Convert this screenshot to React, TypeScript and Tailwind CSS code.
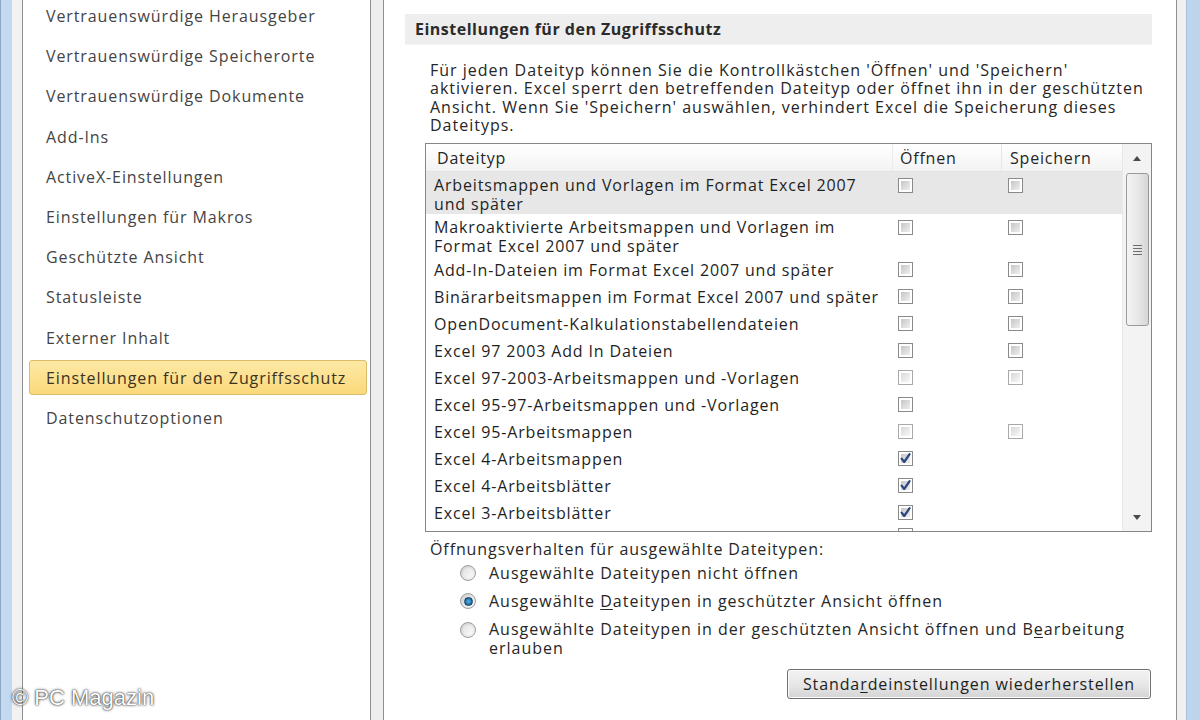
import React from 'react';

type Cb = 'off' | 'on' | 'dim' | 'none';

interface FileRow {
  label: string;
  open: Cb;
  save: Cb;
  twoLines?: boolean;
  selected?: boolean;
}

const navItems = [
  'Vertrauenswürdige Herausgeber',
  'Vertrauenswürdige Speicherorte',
  'Vertrauenswürdige Dokumente',
  'Add-Ins',
  'ActiveX-Einstellungen',
  'Einstellungen für Makros',
  'Geschützte Ansicht',
  'Statusleiste',
  'Externer Inhalt',
  'Einstellungen für den Zugriffsschutz',
  'Datenschutzoptionen',
];

const rows: FileRow[] = [
  { label: 'Arbeitsmappen und Vorlagen im Format Excel 2007 und später', open: 'off', save: 'off', twoLines: true, selected: true },
  { label: 'Makroaktivierte Arbeitsmappen und Vorlagen im Format Excel 2007 und später', open: 'off', save: 'off', twoLines: true },
  { label: 'Add-In-Dateien im Format Excel 2007 und später', open: 'off', save: 'off' },
  { label: 'Binärarbeitsmappen im Format Excel 2007 und später', open: 'off', save: 'off' },
  { label: 'OpenDocument-Kalkulationstabellendateien', open: 'off', save: 'off' },
  { label: 'Excel 97 2003 Add In Dateien', open: 'off', save: 'off' },
  { label: 'Excel 97-2003-Arbeitsmappen und -Vorlagen', open: 'dim', save: 'dim' },
  { label: 'Excel 95-97-Arbeitsmappen und -Vorlagen', open: 'off', save: 'none' },
  { label: 'Excel 95-Arbeitsmappen', open: 'dim', save: 'dim' },
  { label: 'Excel 4-Arbeitsmappen', open: 'on', save: 'none' },
  { label: 'Excel 4-Arbeitsblätter', open: 'on', save: 'none' },
  { label: 'Excel 3-Arbeitsblätter', open: 'on', save: 'none' },
];

function Checkbox({ state }: { state: Cb }) {
  if (state === 'none') return null;
  return (
    <span
      className={
        state === 'dim'
          ? 'relative block w-[15px] h-[15px] border border-[#a9a9a9] bg-white p-[2px]'
          : 'relative block w-[15px] h-[15px] border border-[#8a8a8a] bg-white p-[2px]'
      }
    >
      <span
        className={
          state === 'dim'
            ? 'block w-full h-full bg-linear-to-br from-[#d9d9d9] to-[#f8f8f8]'
            : 'block w-full h-full bg-linear-to-br from-[#c6c6c6] to-[#efefef]'
        }
      />
      {state === 'on' && (
        <svg viewBox="0 0 15 15" className="absolute -left-px -top-px w-[15px] h-[15px]">
          <path d="M3.6 7.6 L6.2 11 L11.6 3.2" fill="none" stroke="#28457e" strokeWidth="2.2" strokeLinecap="round" strokeLinejoin="round" />
        </svg>
      )}
    </span>
  );
}

function Radio({ checked }: { checked?: boolean }) {
  return (
    <span className="flex items-center justify-center w-[16px] h-[16px] rounded-full border border-[#9c9c9c] bg-linear-to-br from-[#cfcfcf] to-[#f8f8f8] shrink-0">
      {checked ? (
        <span className="w-[9px] h-[9px] rounded-full bg-radial from-[#4cb4e8] to-[#0d4f80] border border-[#0d3e66]" />
      ) : (
        <span className="w-[10px] h-[10px] rounded-full bg-linear-to-br from-[#e2e2e2] to-[#fbfbfb]" />
      )}
    </span>
  );
}

function FileTable() {
  return (
    <div className="mt-[9px] ml-[41px] mr-[24px] h-[389px] border border-[#868686] flex overflow-hidden">
      <div className="flex-1 flex flex-col min-w-0">
        {/* header */}
        <div className="grid grid-cols-[467px_109px_1fr] h-[28px] shrink-0 bg-linear-to-b from-white to-[#f3f3f3] border-b border-[#e3e3e3] text-[16px] tracking-[0.8px] text-[#262626]">
          <div className="pl-[11px] flex items-center border-r border-[#ececec]">Dateityp</div>
          <div className="pl-[7px] flex items-center border-r border-[#e6e6e6]">Öffnen</div>
          <div className="pl-[8px] flex items-center">Speichern</div>
        </div>
        {rows.map((r) => (
          <div
            key={r.label}
            className={
              (r.selected ? 'bg-[#e7e7e7] ' : '') +
              (r.twoLines ? 'h-[42px] pt-[4px] items-start ' : 'h-[27px] items-center ') +
              'grid grid-cols-[467px_109px_1fr] shrink-0 text-[16px] tracking-[0.85px] text-[#1f1f1f]'
            }
          >
            <div className="pl-[8px]">
              <div className={r.twoLines ? 'w-[440px] leading-[19px]' : 'whitespace-nowrap'}>{r.label}</div>
            </div>
            <div className={r.twoLines ? 'pl-[5px] pt-[2px]' : 'pl-[5px]'}>
              <Checkbox state={r.open} />
            </div>
            <div className={r.twoLines ? 'pl-[6px] pt-[2px]' : 'pl-[6px]'}>
              <Checkbox state={r.save} />
            </div>
          </div>
        ))}
        {/* next row, cut off by the list's bottom edge */}
        <div className="grid grid-cols-[467px_109px_1fr] h-[27px] shrink-0 pt-[2px]">
          <div />
          <div className="pl-[5px]">
            <Checkbox state="off" />
          </div>
        </div>
      </div>
      {/* scrollbar */}
      <div className="w-[29px] shrink-0 bg-[#f3f3f3] border-l border-[#e8e8e8] flex flex-col items-center">
        <div className="h-[28px] w-full flex items-center justify-center">
          <svg viewBox="0 0 8 5" className="w-[8px] h-[5px]">
            <path d="M0 5 L4 0 L8 5 Z" fill="#4a4a4a" />
          </svg>
        </div>
        <div className="mt-[1px] w-[23px] h-[153px] rounded-[3px] border border-[#9a9a9a] bg-linear-to-r from-[#f4f4f4] via-[#e8e8e8] to-[#d6d6d6] flex flex-col items-center justify-center gap-[2px]">
          <span className="w-[9px] h-px bg-[#6f6f6f]" />
          <span className="w-[9px] h-px bg-[#6f6f6f]" />
          <span className="w-[9px] h-px bg-[#6f6f6f]" />
          <span className="w-[9px] h-px bg-[#6f6f6f]" />
        </div>
        <div className="flex-1" />
        <div className="h-[28px] w-full flex items-center justify-center">
          <svg viewBox="0 0 8 5" className="w-[8px] h-[5px]">
            <path d="M0 0 L8 0 L4 5 Z" fill="#4a4a4a" />
          </svg>
        </div>
      </div>
    </div>
  );
}

export default function App() {
  return (
    <div className="relative w-[1200px] h-[720px] overflow-hidden flex bg-[#f0f0f0] font-['Open_Sans','Noto_Sans',sans-serif]">
      {/* window frame left */}
      <div className="w-[12px] bg-[#c3d9ef] border-l border-[#8ea5c0]" />
      <div className="w-[10px] bg-[#f2f2f2]" />

      {/* category list */}
      <nav className="w-[349px] bg-white border-x border-[#8f8f8f] pl-[6px] pr-[3px]">
        <ul className="-mt-[4px] flex flex-col">
          {navItems.map((item) => {
            const active = item === 'Einstellungen für den Zugriffsschutz';
            return (
              <li key={item} className="h-[40.2px] flex items-center">
                <div
                  className={
                    active
                      ? 'w-full h-[35px] flex items-center pl-[16px] rounded-[3px] border border-[#dcbc68] bg-linear-to-b from-[#fde9a4] to-[#fbd97a] text-[16px] tracking-[0.9px] text-[#3a3222]'
                      : 'w-full h-[35px] flex items-center pl-[16px] border border-transparent text-[16px] tracking-[0.9px] text-[#444444]'
                  }
                >
                  {item}
                </div>
              </li>
            );
          })}
        </ul>
      </nav>

      <div className="w-[12px] bg-[#eeeeee]" />

      {/* settings page */}
      <main className="flex-1 bg-white border-x border-[#8f8f8f] flex flex-col">
        <div className="mt-[14px] ml-[21px] mr-[24px] h-[31px] bg-[#eeeeee] border-b border-[#f6f6f6] pl-[10px] flex items-center font-bold text-[16px] tracking-[0.5px] text-[#2b2b2b]">
          Einstellungen für den Zugriffsschutz
        </div>

        <p className="mt-[16px] ml-[46px] w-[730px] text-[16px] tracking-[1px] leading-[18.3px] text-[#262626]">
          Für jeden Dateityp können Sie die Kontrollkästchen 'Öffnen' und 'Speichern' aktivieren. Excel sperrt den
          betreffenden Dateityp oder öffnet ihn in der geschützten Ansicht. Wenn Sie 'Speichern' auswählen, verhindert
          Excel die Speicherung dieses Dateityps.
        </p>

        <FileTable />

        <div className="mt-[8px] ml-[46px] text-[16px] tracking-[0.9px] leading-[18px] text-[#262626]">
          Öffnungsverhalten für ausgewählte Dateitypen:
        </div>
        <div className="ml-[76px] mt-[1px] flex flex-col text-[16px] tracking-[1px] text-[#262626]">
          <label className="h-[28px] flex items-center gap-[13px]">
            <Radio />
            <span>Ausgewählte Dateitypen nicht öffnen</span>
          </label>
          <label className="h-[28px] flex items-center gap-[13px]">
            <Radio checked />
            <span>
              Ausgewählte <span className="underline underline-offset-2">D</span>ateitypen in geschützter Ansicht öffnen
            </span>
          </label>
          <label className="flex items-start gap-[13px] pt-[5px]">
            <span className="pt-[2px]">
              <Radio />
            </span>
            <span className="relative w-[660px] leading-[19px]">
              Ausgewählte Dateitypen in der geschützten Ansicht öffnen und Bearbeitung erlauben
              {/* access-key underline under the "e" of Bearbeitung */}
              <span className="absolute left-[545px] top-[17px] w-[9px] h-px bg-[#262626]" />
            </span>
          </label>
        </div>

        <div className="mt-[11px] mr-[25px] flex justify-end">
          <button className="w-[364px] h-[30px] rounded-[3px] border border-[#707070] bg-linear-to-b from-[#f3f3f3] via-[#e8e8e8] to-[#d4d4d4] text-[16px] tracking-[0.9px] text-[#1e1e1e] shadow-[inset_0_0_0_1px_#fbfbfb]">
            Standa<span className="underline underline-offset-2">r</span>deinstellungen wiederherstellen
          </button>
        </div>
      </main>

      {/* window frame right */}
      <div className="w-[9px] bg-[#f1eff1]" />
      <div className="w-[14px] bg-[#bcd4ec] border-l border-[#a9c2dc]" />

      {/* watermark */}
      <div className="absolute left-[12px] top-[681px] text-[22px] text-white font-['Liberation_Sans',Arial,sans-serif] [text-shadow:0_0_3px_rgba(0,0,0,0.9),0_0_1px_rgba(0,0,0,0.8)]">
        © PC Magazin
      </div>
    </div>
  );
}
